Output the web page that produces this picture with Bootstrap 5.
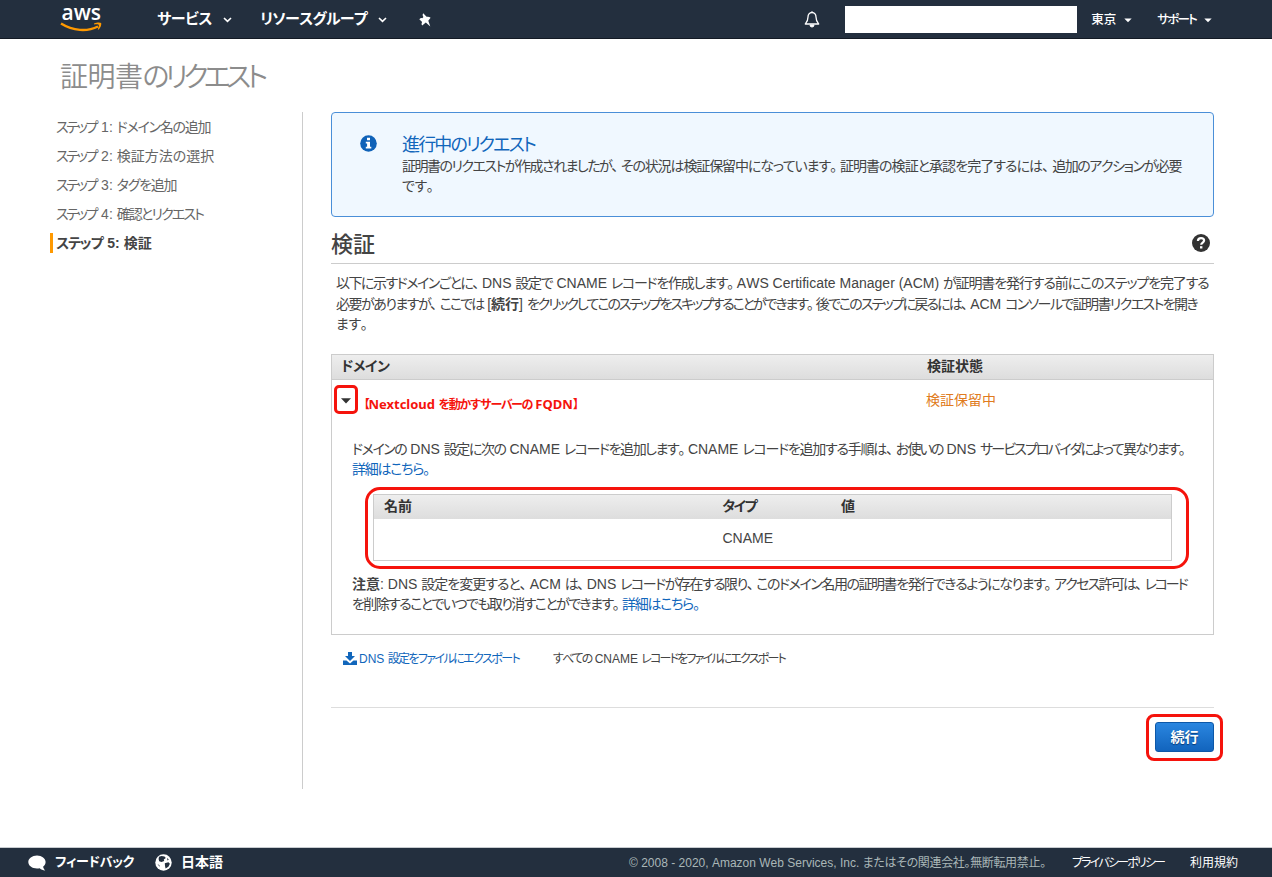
<!DOCTYPE html>
<html lang="ja">
<head>
<meta charset="utf-8">
<title>AWS Certificate Manager</title>
<link href="https://cdn.jsdelivr.net/npm/bootstrap@5.3.0/dist/css/bootstrap.min.css" rel="stylesheet">
<style>
body{font-family:"Liberation Sans","Noto Sans CJK JP",sans-serif;font-size:14px;line-height:20px;color:#444;font-feature-settings:"palt";font-kerning:none;height:877px;overflow:hidden}
svg{display:block;flex:none}
.ln{white-space:pre}
.en{letter-spacing:0}
.pz{padding-right:4px}
.t03{letter-spacing:-.34px}.t04{letter-spacing:-.41px}.t05{letter-spacing:-.5px}.t07{letter-spacing:-.67px}
.t09{letter-spacing:-.95px}.t10{letter-spacing:-1px}.t11{letter-spacing:-1.12px}.t12{letter-spacing:-1.24px}.t13{letter-spacing:-1.26px}
.t14{letter-spacing:-1.44px}.t15{letter-spacing:-1.5px}.t16{letter-spacing:-1.6px}.t17{letter-spacing:-1.75px}
.t18{letter-spacing:-1.85px}.t19{letter-spacing:-1.9px}.t21{letter-spacing:-2.1px}.t22{letter-spacing:-2.25px}.t46{letter-spacing:-4.6px}
a{color:#1166bb;text-decoration:none}
.topbar{height:39px;background:#232f3e;color:#fff;border-bottom:1px solid #131a24}
.logo{margin-left:60px}
.logo text{font-family:"Open Sans";font-weight:600;font-size:21px;letter-spacing:0}
.top-menu{font-size:15px;font-weight:700;height:20px}
.top-small{font-size:12.5px;font-weight:500;padding-top:2px}
.account-box{width:232px;height:27px;background:#fff}
.page-title{font-size:28px;line-height:36px;font-weight:350;color:#8c8c8c;padding:21px 0 0 60px;height:73px}
.side{width:303px;height:677px;border-right:1px solid #ccc;padding:5px 0 0 50px;color:#666}
.side .step{height:20px;margin-bottom:9px;padding-left:6px}
.side .step span:first-child{padding-right:1px}
.side .now{border-left:3px solid #f90;padding-left:3px;font-weight:700;color:#444}
.main{width:883px;margin-left:28px}
.info-box{height:105px;border:1px solid #4a8fd8;border-radius:4px;background:#f0f8ff;padding:21px 0 0 28px}
.info-box svg{margin:1px 25px 0 0}
.info-title{font-size:18px;line-height:22px;color:#1166bb}
.sect{height:47px;border-bottom:1px solid #ccc;padding:12px 3px 0 0}
.sect h2{font-size:22px;line-height:32px;margin:0}
.intro{line-height:20.5px;padding:9px 0 0 5px;height:90px}
.gridbox{border:1px solid #ccc;background:#fff}
.outer{height:281px}
.grid-head{background:linear-gradient(#eee,#ddd);font-weight:700;color:#333;line-height:22px}
.outer>.grid-head{height:25px;border-bottom:1px solid #ccc}
.c-dom{width:586px;padding-left:9px}
.c-stat{padding-left:9px}
.dom-row{height:44px;padding-left:2px}
.redmark{border:3px solid #f5130c}
.toggle{width:24px;height:29px;border-radius:5px;margin-top:5px}
.red-text{font:700 12px/20px "Noto Sans","Noto Sans CJK JP",sans-serif;color:#f5130c;margin-top:14px;width:568px}
.red-text .en{font-size:13px}
.pending{color:#e07b20;margin-top:10px}
.detail{padding:15px 0 0 20px}
.record-frame{width:824px;height:82px;border-radius:15px;margin:8px 0 5px 13px;padding:4px 0 0 5px}
.record{width:799px;height:67px}
.record .grid-head{height:24px}
.record-row{padding-top:9px}
.r-name{width:348.5px;padding-left:10px}
.r-type{width:118.5px}
.export{font-size:12px;margin-top:13px;padding-left:12px}
.export .ln{padding-top:1px;margin-bottom:-1px}
.export a{width:196px;padding-left:2px}
.actions{margin-top:39px;border-top:1px solid #ddd;padding-top:6px}
.go-frame{border-radius:8px;padding:5px 6px;margin-right:-9px;width:77px;height:47px}
.go{width:59px;height:30px;padding:0;border:1px solid #0d58a8;border-radius:3px;background:linear-gradient(#2a86e0,#1264bd);font-size:14px;font-weight:700;line-height:20px;text-shadow:0 1px 1px #083a75;display:block}
.foot{height:30px;background:#232f3e;border-top:1px solid #c8ccd0;color:#fff;margin-top:58px}
.foot-menu{font-size:13px;font-weight:700;height:22px}
.foot-legal{font-size:12px}
.copy{color:#aab7b8;width:443px}
</style>
</head>
<body class="bg-white">
<nav class="topbar d-flex align-items-center">
<svg class="logo" width="44" height="36" viewBox="0 0 44 36"><text x="1.5" y="19" fill="#fff">aws</text><path d="M1 22.500C13 30 27 31 38 25.500" fill="none" stroke="#f90" stroke-width="2.400"/><path d="M34 22.600c3-1.400 6-1.300 7.200-.6.4 2-.7 5-2.800 6.800l-.7-.5c.8-1.800 1.500-3.700 1-4.500-.8-.6-2.700-.5-4.500-.3z" fill="#f90"/></svg>
<div class="top-menu ln t04" style="margin-left:53px">サービス</div>
<svg width="9" height="6" viewBox="0 0 9 6" style="margin:2px 0 0 11px"><path d="M1 1l3.500 3.400L8 1" fill="none" stroke="#fff" stroke-width="1.600"/></svg>
<div class="top-menu ln t07" style="margin-left:28px">リソースグループ</div>
<svg width="9" height="6" viewBox="0 0 9 6" style="margin:2px 0 0 11px"><path d="M1 1l3.500 3.400L8 1" fill="none" stroke="#fff" stroke-width="1.600"/></svg>
<svg width="13" height="14" viewBox="0 0 13 14" style="margin:1px 0 0 32px"><path d="M4.200.3l3.400 3.500c1.500-.4 2.900-.1 4 .9L9.300 7.800l2 5.600-4.500-3.900-3.600 3c-.8-1-.8-2.400-.1-3.600L.3 6.200c1-1 2-1.300 3-1L4.400 4C3.500 2.800 3.400 1.500 4.200.3z" fill="#fff"/></svg>
<svg class="ms-auto" width="16" height="17" viewBox="0 0 16 17"><path d="M8 1.500c-2.700 0-4 2-4 4.500 0 4-1.300 5.300-2.700 7h13.400C13.300 11.300 12 10 12 6c0-2.500-1.300-4.500-4-4.500z" fill="none" stroke="#fff" stroke-width="1.300" stroke-linejoin="round"/><path d="M8 .2v1.500M6 14a2 2 0 0 0 4 0z" stroke="#fff" fill="#fff"/></svg>
<div class="account-box" style="margin-left:25px"></div>
<div class="top-small ln" style="margin-left:14px">東京</div>
<svg width="8" height="5" viewBox="0 0 8 5" style="margin:2px 0 0 8px"><path d="M.3.5h7.400L4 4.300z" fill="#fff"/></svg>
<div class="top-small ln t17" style="margin-left:25px">サポート</div>
<svg width="8" height="5" viewBox="0 0 8 5" style="margin:2px 60px 0 8px"><path d="M.3.5h7.400L4 4.300z" fill="#fff"/></svg>
</nav>
<h1 class="page-title ln m-0"><span class="t05">証明書</span><span class="t46">のリクエスト</span></h1>
<div class="d-flex">
<aside class="side">
<div class="step ln"><span class="t22">ステップ</span> 1: <span class="t12">ドメイン名の追加</span></div>
<div class="step ln"><span class="t22">ステップ</span> 2: <span>検証方法の選択</span></div>
<div class="step ln"><span class="t22">ステップ</span> 3: <span class="t12">タグを追加</span></div>
<div class="step ln"><span class="t22">ステップ</span> 4: <span class="t18">確認とリクエスト</span></div>
<div class="step now ln"><span class="t11">ステップ</span> 5: 検証</div>
</aside>
<main class="main">
<section class="info-box d-flex">
<svg width="17" height="17" viewBox="0 0 17 17"><circle cx="8.500" cy="8.500" r="8.300" fill="#0f62b8"/><path d="M7 2.700h3v2.500H7zM5.800 6.700H10v5h1.300v1.800H5.800v-1.800h1.300V8.500H5.800z" fill="#fff"/></svg>
<div>
<div class="info-title ln t18">進行中のリクエスト</div>
<div class="ln"><span class="t15 pz">証明書のリクエストが作成されましたが、</span><span class="t11 pz">その状況は検証保留中になっています。</span><span class="t09 pz">証明書の検証と承認を完了するには、</span><span class="t14">追加のアクションが必要</span></div>
<div class="ln t05">です。</div>
</div>
</section>
<div class="sect d-flex justify-content-between">
<h2>検証</h2>
<svg width="18" height="18" viewBox="0 0 18 18" style="margin:5px 1px 0 0"><circle cx="9" cy="9" r="9" fill="#333"/><path d="M5.900 7C6 4.900 7.200 4.100 9 4.100c1.900 0 3.100 1 3.100 2.500 0 1.900-2.900 2-2.900 4.200" fill="none" stroke="#fff" stroke-width="2.200"/><path d="M8 12.200h2.400v2.300H8z" fill="#fff"/></svg>
</div>
<div class="intro">
<div class="ln"><span class="t15 pz">以下に示すドメインごとに、</span><span class="t13 pz"><span class="en">DNS </span>設定で<span class="en"> CNAME </span>レコードを作成します。</span>AWS Certificate Manager (ACM) <span class="t11">が証明書を発行する前にこのステップを完了する</span></div>
<div class="ln"><span class="t15 pz">必要がありますが、</span><span class="t19">ここでは<span class="en"> [<b>続行</b>] </span></span><span class="t21 pz">をクリックしてこのステップをスキップすることができます。</span><span class="t18 pz">後でこのステップに戻るには、</span>ACM <span class="t16">コンソールで証明書リクエストを開き</span></div>
<div class="ln t05">ます。</div>
</div>
<section class="gridbox outer">
<div class="grid-head d-flex"><div class="c-dom t04">ドメイン</div><div class="c-stat">検証状態</div></div>
<div class="dom-row d-flex align-items-start">
<div class="toggle redmark d-flex align-items-center justify-content-center"><svg width="10" height="6" viewBox="0 0 10 6" style="margin-top:3px"><path d="M0 .3h10L5 5.600z" fill="#333"/></svg></div>
<div class="red-text ln t16">【<span class="en">Nextcloud </span>を動かすサーバーの<span class="en"> FQDN</span>】</div>
<div class="pending">検証保留中</div>
</div>
<div class="detail">
<div class="ln"><span class="t14 pz">ドメインの<span class="en"> DNS </span>設定に次の<span class="en"> CNAME </span>レコードを追加します。</span><span class="t12 pz"><span class="en">CNAME </span>レコードを追加する手順は、</span><span class="t18">お使いの<span class="en"> DNS </span>サービスプロバイダによって異なります。</span></div>
<a href="#" class="ln t12 d-block">詳細はこちら。</a>
<div class="record-frame redmark">
<div class="record gridbox">
<div class="grid-head d-flex"><div class="r-name">名前</div><div class="r-type t16">タイプ</div><div>値</div></div>
<div class="record-row d-flex"><div class="r-name"></div><div class="r-type">CNAME</div><div></div></div>
</div>
</div>
<div class="ln"><b>注意</b>: DNS <span class="t10 pz">設定を変更すると、</span>ACM <span class="t15 pz">は、</span>DNS <span class="t15 pz">レコードが存在する限り、</span><span class="t14 pz">このドメイン名用の証明書を発行できるようになります。</span><span class="t17 pz">アクセス許可は、</span><span class="t21">レコード</span></div>
<div class="ln"><span class="t16 pz">を削除することでいつでも取り消すことができます。</span><a href="#" class="t12">詳細はこちら。</a></div>
</div>
</section>
<div class="export d-flex align-items-center">
<svg width="14" height="13" viewBox="0 0 14 13"><path d="M5 0h4v4h3L7 9 2 4h3zM0 8.500h3.500L7 11.500l3.500-3H14V13H0z" fill="#1166bb"/></svg>
<a href="#" class="ln t16"><span class="en">DNS </span>設定をファイルにエクスポート</a>
<div class="ln t18">すべての<span class="en"> CNAME </span>レコードをファイルにエクスポート</div>
</div>
<div class="actions d-flex justify-content-end">
<div class="go-frame redmark"><button class="btn btn-primary go">続行</button></div>
</div>
</main>
</div>
<footer class="foot d-flex align-items-center">
<svg width="19" height="16" viewBox="0 0 19 16" style="margin-left:28px"><path d="M9 .5c4.900 0 8.600 3 8.600 6.600 0 2-1.100 3.600-2.500 4.700.3 1.500 1 2.700 2.200 3.800-2.400-.1-4.200-1-5.600-2.300-.9.200-1.700.3-2.700.3C4.100 13.600.3 10.700.3 7.100S4.100.5 9 .5z" fill="#fff"/></svg>
<div class="foot-menu ln t03" style="margin-left:8px">フィードバック</div>
<svg width="17" height="17" viewBox="0 0 17 17" style="margin-left:21px"><circle cx="8.500" cy="8.500" r="8.200" fill="#fff"/><path d="M4 2.800l2.500-.9 3 .6 1.300 1.600-2 1.300.4 1.500-2.700 1L4.200 7.200 3.600 5zM9.800 9.200l3.600-.9 1.500 1.500-1.500 3-2.800 1.800-.6-2.600zM12 4l1.800 1.500-1.300.9zM2.500 10l1.900 1.200.4 1.900z" fill="#232f3e"/></svg>
<div class="foot-menu ln" style="margin-left:9px;font-size:14px">日本語</div>
<div class="foot-legal ln d-flex ms-auto">
<div class="copy t03"><span class="en">© 2008 - 2020, Amazon Web Services, Inc. </span>またはその関連会社。無断転用禁止。</div>
<div class="t18" style="width:118px">プライバシーポリシー</div>
<div style="width:82px">利用規約</div>
</div>
</footer>
<script src="https://cdn.jsdelivr.net/npm/bootstrap@5.3.0/dist/js/bootstrap.bundle.min.js"></script>
</body>
</html>
